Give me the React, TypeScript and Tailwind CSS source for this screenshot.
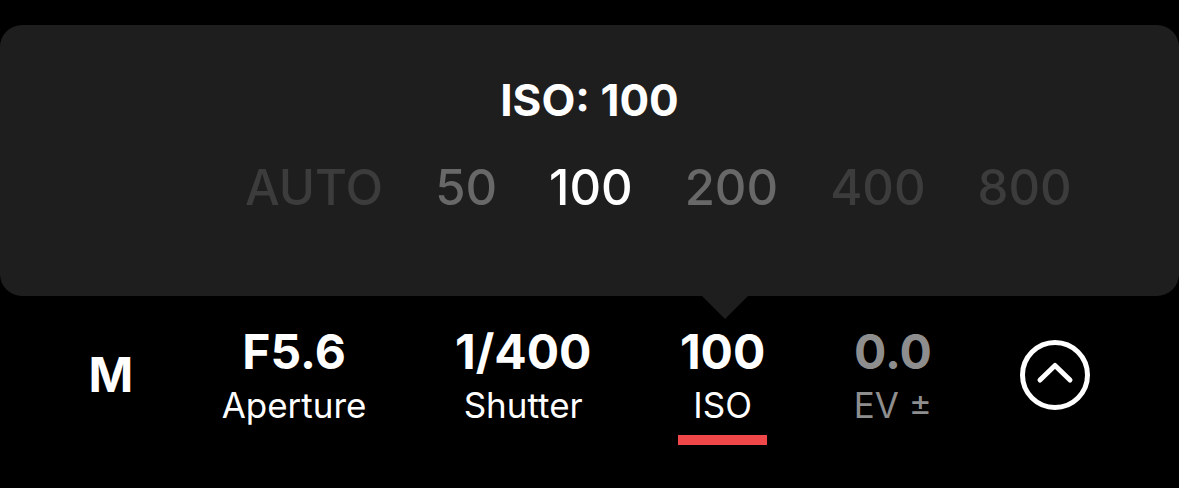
import React from 'react';

const isoOptions = [
  { label: 'AUTO', tone: 'text-[#3c3c3c]' },
  { label: '50', tone: 'text-[#686868]' },
  { label: '100', tone: 'text-white' },
  { label: '200', tone: 'text-[#686868]' },
  { label: '400', tone: 'text-[#3c3c3c]' },
  { label: '800', tone: 'text-[#3c3c3c]' },
];

const settings = [
  { value: '5.6', prefix: 'F', label: 'Aperture', active: false, muted: false },
  { value: '1/400', prefix: '', label: 'Shutter', active: false, muted: false },
  { value: '100', prefix: '', label: 'ISO', active: true, muted: false },
  { value: '0.0', prefix: '', label: 'EV ±', active: false, muted: true },
];

const CollapseButton = () => (
  <svg width="70" height="70" viewBox="0 0 70 70" fill="none">
    <circle cx="35" cy="35" r="32.5" stroke="white" strokeWidth="5" />
    <polyline
      points="20,40 35,25.5 50,40"
      stroke="white"
      strokeWidth="5"
      strokeLinecap="round"
      strokeLinejoin="round"
    />
  </svg>
);

export default function App() {
  return (
    <div
      className="h-[488px] w-[1179px] overflow-hidden bg-black pt-[25px] text-white"
      style={{ fontFamily: 'Inter, "Noto Sans", sans-serif' }}
    >
      {/* ISO picker sheet */}
      <div className="relative flex h-[271px] flex-col rounded-[22px] bg-[#1e1e1e]">
        <h1 className="mt-[53px] text-center text-[44px] font-bold leading-none">ISO: 100</h1>
        <div className="mt-[41px] flex gap-[52px] pl-[245px]">
          {isoOptions.map((opt) => (
            <span key={opt.label} className={`text-[49px] font-medium leading-none ${opt.tone}`}>
              {opt.label}
            </span>
          ))}
        </div>
        <div className="absolute left-[702px] top-full h-0 w-0 border-x-[23px] border-t-[23px] border-x-transparent border-t-[#1e1e1e]" />
      </div>

      {/* bottom exposure bar */}
      <div className="flex h-[158px] items-center justify-evenly">
        <span className="text-[48px] font-bold leading-none">M</span>
        {settings.map((s) => (
          <div key={s.label} className="relative flex flex-col items-center">
            <span
              className={`text-[48px] font-bold leading-none ${s.muted ? 'text-[#8e8e8e]' : 'text-white'}`}
            >
              {s.prefix}
              {s.value}
            </span>
            <span
              className={`mt-[12px] text-[35px] leading-none ${s.muted ? 'text-[#8e8e8e]' : 'text-white'}`}
            >
              {s.label}
            </span>
            {s.active && (
              <span className="absolute -left-[2px] -right-[2px] top-[107px] h-[10px] bg-[#f0474a]" />
            )}
          </div>
        ))}
        <CollapseButton />
      </div>
    </div>
  );
}
